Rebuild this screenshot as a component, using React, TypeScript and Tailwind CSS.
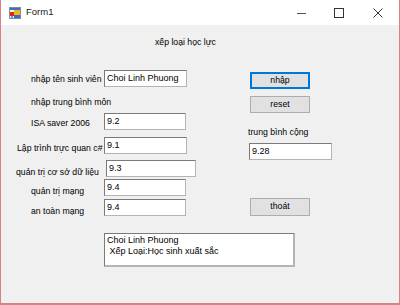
import React from 'react';

const font = { fontFamily: '"Liberation Sans", Arial, sans-serif' };

function TextBox({ value, className = '' }: { value: string; className?: string }) {
  return (
    <div className={`h-[17px] shrink-0 bg-white border border-[#7a7a7a] border-r-[#b4b4b4] border-b-[#b4b4b4] pl-[2px] text-[9px] leading-[15px] text-black whitespace-nowrap overflow-hidden ${className}`}>
      {value}
    </div>
  );
}

function Button({ label, focused = false, className = '' }: { label: string; focused?: boolean; className?: string }) {
  return (
    <div
      className={`w-[60px] flex items-center justify-center bg-[#e1e1e1] text-[8.7px] text-black ${
        focused ? 'border-2 border-[#0078d7]' : 'border border-[#adadad]'
      } ${className}`}
    >
      {label}
    </div>
  );
}

function Row({ label, pl, align, leading, children, className = '' }: { label: string; pl: string; align: string; leading: string; children: React.ReactNode; className?: string }) {
  return (
    <div className={`flex ${align} ${className}`}>
      <div className={`w-[103px] shrink-0 whitespace-nowrap text-[8.7px] ${leading} ${pl}`}>{label}</div>
      {children}
    </div>
  );
}

function FormIcon() {
  return (
    <svg width="12" height="12" viewBox="0 0 12 12">
      <rect x="0.5" y="0.5" width="11" height="11" fill="#f4f4f4" stroke="#8a8a8a" />
      <rect x="1" y="1" width="10" height="2" fill="#3d6fc4" />
      <rect x="5" y="3" width="6" height="5" fill="#f2b51c" />
      <rect x="1" y="5" width="4" height="4" fill="#d92a1c" />
      <rect x="5" y="8" width="6" height="3" fill="#2f6fd0" />
      <rect x="2" y="9" width="2" height="2" fill="#5a9be0" />
    </svg>
  );
}

export default function App() {
  return (
    <div className="w-[400px] h-[305px] flex flex-col bg-[#f0f0f0] border-l border-r border-b-2 border-[#d88383] text-black overflow-hidden" style={font}>
      {/* title bar */}
      <div className="h-[25px] shrink-0 bg-white flex items-center">
        <div className="ml-[8px] flex items-center">
          <FormIcon />
        </div>
        <span className="ml-[5px] text-[9.5px] text-[#1a1a1a]">Form1</span>
        <div className="ml-auto flex items-center h-full">
          <div className="w-[37px] h-full flex items-center justify-center">
            <svg width="10" height="10" viewBox="0 0 10 10">
              <line x1="0" y1="5.5" x2="9" y2="5.5" stroke="#555" strokeWidth="1" />
            </svg>
          </div>
          <div className="w-[37px] h-full flex items-center justify-center">
            <svg width="10" height="10" viewBox="0 0 10 10">
              <rect x="0.5" y="0.5" width="9" height="9" fill="none" stroke="#333" strokeWidth="1" />
            </svg>
          </div>
          <div className="w-[42px] h-full flex items-center justify-center">
            <svg width="10" height="10" viewBox="0 0 10 10">
              <path d="M0.5 0.5 L9.5 9.5 M9.5 0.5 L0.5 9.5" stroke="#333" strokeWidth="1" />
            </svg>
          </div>
        </div>
      </div>

      {/* heading */}
      <div className="mt-[11px] h-[12px] pl-[154px] text-[8.7px] leading-[12px]">xếp loại học lực</div>

      <div className="flex">
        {/* left column */}
        <div className="w-[247px] shrink-0 flex flex-col">
          <Row label="nhập tên sinh viên" pl="pl-[30px]" align="items-center" leading="leading-[12px]" className="mt-[22px]">
            <TextBox value="Choi Linh Phuong" className="w-[83px]" />
          </Row>
          <div className="mt-[9px] h-[12px] pl-[30px] text-[8.7px] leading-[12px] whitespace-nowrap">nhập trung bình môn</div>
          <Row label="ISA saver 2006" pl="pl-[30px]" align="items-end" leading="leading-[13px]" className="mt-[5px]">
            <TextBox value="9.2" className="w-[82px]" />
          </Row>
          <Row label="Lập trình trực quan c#" pl="pl-[16px]" align="items-end" leading="leading-[12px]" className="mt-[7px]">
            <TextBox value="9.1" className="w-[83px]" />
          </Row>
          <Row label="quản trị cơ sở dữ liệu" pl="pl-[15px]" align="items-end" leading="leading-[10px]" className="mt-[6px]">
            <TextBox value="9.3" className="ml-[2px] w-[90px]" />
          </Row>
          <Row label="quản trị mạng" pl="pl-[30px]" align="items-end" leading="leading-[10px]" className="mt-[2px]">
            <TextBox value="9.4" className="w-[82px]" />
          </Row>
          <Row label="an toàn mạng" pl="pl-[30px]" align="items-end" leading="leading-[10px]" className="mt-[3px]">
            <TextBox value="9.4" className="w-[82px]" />
          </Row>
        </div>

        {/* right column */}
        <div className="flex flex-col">
          <Button label="nhập" focused className="ml-[2px] mt-[24px] h-[17px]" />
          <Button label="reset" className="ml-[2px] mt-[7px] h-[17px]" />
          <div className="mt-[13px] h-[12px] text-[8.7px] leading-[12px] whitespace-nowrap">trung bình cộng</div>
          <TextBox value="9.28" className="mt-[5px] ml-[1px] w-[83px]" />
          <Button label="thoát" className="ml-[2px] mt-[38px] h-[18px]" />
        </div>
      </div>

      {/* result box */}
      <div className="mt-[17px] ml-[103px] w-[191px] h-[34px] bg-white border border-[#7a7a7a] border-r-2 border-b-2 border-r-[#b4b4b4] border-b-[#b4b4b4] pl-[2px] pt-[1px] text-[9px] leading-[11px] whitespace-pre">
        <div>Choi Linh Phuong</div>
        <div> Xếp Loại:Học sinh xuất sắc</div>
      </div>
    </div>
  );
}
